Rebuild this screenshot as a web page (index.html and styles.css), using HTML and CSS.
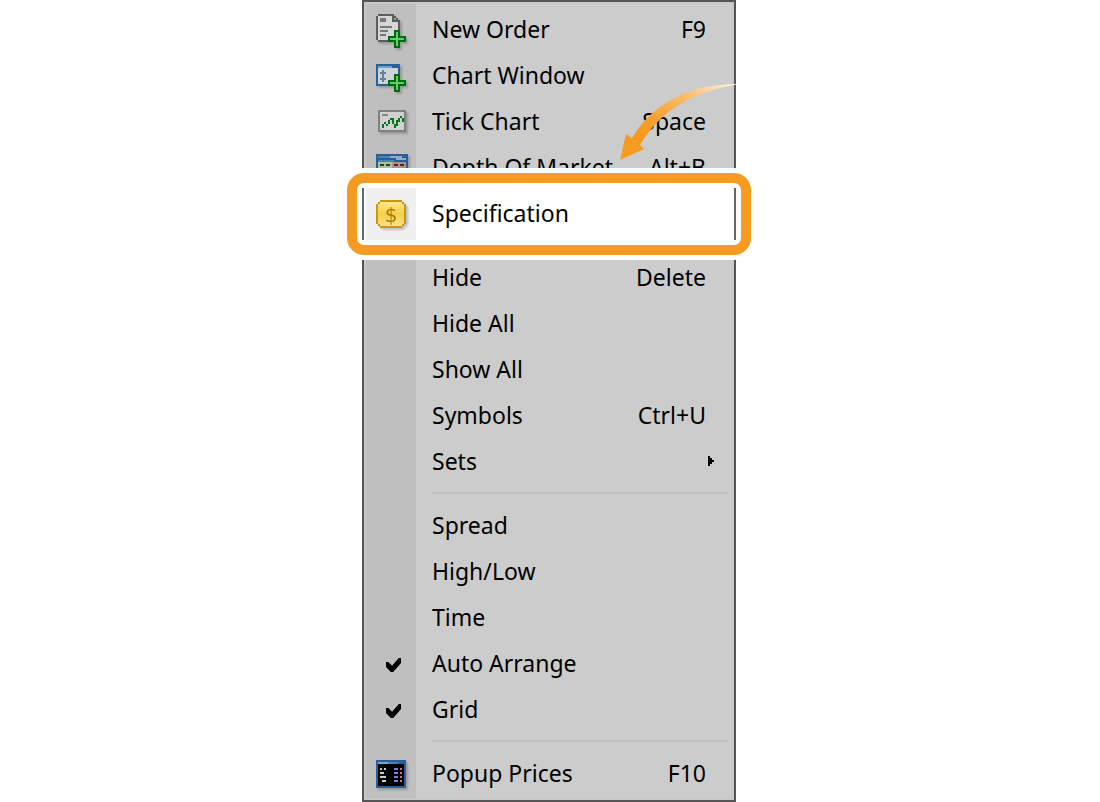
FILE: index.html
```
<!DOCTYPE html>
<html lang="en">
  <head>
    <meta charset="UTF-8" />
    <meta name="viewport" content="width=device-width, initial-scale=1" />
    <title>Market Watch Menu</title>
    <link rel="stylesheet" href="styles.css">
  </head>
  <body>
    <nav class="menu">
      <div class="menu-list">
        <button type="button" class="item">
          <svg class="icon" viewBox="0 0 18 18">
            <path fill="#d6d6d6" d="M2 2h7v3h3v9H2z" />
            <path fill="#5c5c5c" d="M1 2h1v12H1zM2 1h8v1H2zM2 14h6v1H2zM9 2h1v2h2v1H9zM10 2h1v1h-1zM11 3h1v1h-1zM12 4h1v5h-1z" />
            <path fill="#777" d="M3 3h3v2H3zM3 7h6v1H3zM3 9h4v1H3zM3 11h3v1H3z" />
            <path fill="#006b0b" d="M10 9h3v3h3v3h-3v3h-3v-3H7v-3h3z" />
            <path fill="#5fcf6b" d="M11 10h1v3h3v1h-3v3h-1v-3H8v-1h3z" />
          </svg>
          <span class="name">New Order</span>
          <span class="key">F9</span>
        </button>
        <button type="button" class="item">
          <svg class="icon" viewBox="0 0 18 18">
            <path fill="#2a6099" d="M1 3h12v11H1z" />
            <path fill="#d0d3d6" d="M2 5h10v8H2z" />
            <path fill="#6f9fce" d="M2 4h7v1H2z" />
            <path fill="#66809a" d="M4 6h1v6H4zM3 7h3v1H3zM3 10h3v1H3z" />
            <path fill="#006b0b" d="M10 8h3v3h3v3h-3v3h-3v-3H7v-3h3z" />
            <path fill="#5fcf6b" d="M11 9h1v3h3v1h-3v3h-1v-3H8v-1h3z" />
          </svg>
          <span class="name">Chart Window</span>
        </button>
        <button type="button" class="item">
          <svg class="icon" viewBox="0 0 18 18">
            <path fill="#808080" d="M2 3h14v11H2z" />
            <path fill="#cfd2cf" d="M3 4h12v9H3z" />
            <path fill="#888" d="M4 5h3v1H4z" />
            <path fill="#08751a" d="M4 10h1v2H4zM5 9h1v1H5zM6 10h1v1H6zM7 8h1v2H7zM8 7h1v1H8zM9 7h1v3H9zM10 10h1v2h-1zM11 8h1v3h-1zM12 7h1v2h-1zM13 6h1v1h-1zM14 7h1v2h-1z" />
          </svg>
          <span class="name">Tick Chart</span>
          <span class="key">Space</span>
        </button>
        <button type="button" class="item">
          <svg class="icon" viewBox="0 0 18 18">
            <path fill="#285f98" d="M1 2h16v14H1z" />
            <path fill="#4b83b9" d="M2 3h7v1H2zM2 5h8v1H2z" />
            <path fill="#8fabc8" d="M8 3h6v1H8zM11 4h5v1h-5z" />
            <path fill="#a9c58a" d="M2 6h7v9H2z" />
            <path fill="#c08a84" d="M9 6h7v9H9z" />
            <path fill="#333" d="M3 7h2v1H3zM6 7h2v1H6zM10 7h2v1h-2zM13 7h2v1h-2z" />
          </svg>
          <span class="name">Depth Of Market</span>
          <span class="key">Alt+B</span>
        </button>
        <button type="button" class="item item-marked">
          <svg class="icon" viewBox="0 0 18 18">
            <defs>
              <linearGradient id="gold" x1="0" y1="0" x2="0" y2="1">
                <stop offset="0" stop-color="#ffe88c" />
                <stop offset="0.5" stop-color="#f5cf48" />
                <stop offset="1" stop-color="#fce187" />
              </linearGradient>
            </defs>
            <path fill="#c49a0c" d="M3 2h11v1h1v1h1v10h-1v1h-1v1H3v-1H2v-1H1V4h1V3h1z" />
            <path fill="url(#gold)" d="M3 3h11v1h1v10h-1v1H3v-1H2V4h1z" />
            <text class="coin" x="8.5" y="13" text-anchor="middle">$</text>
          </svg>
          <span class="name">Specification</span>
        </button>
        <hr class="divider">
        <button type="button" class="item">
          <span class="name">Hide</span>
          <span class="key">Delete</span>
        </button>
        <button type="button" class="item">
          <span class="name">Hide All</span>
        </button>
        <button type="button" class="item">
          <span class="name">Show All</span>
        </button>
        <button type="button" class="item">
          <span class="name">Symbols</span>
          <span class="key">Ctrl+U</span>
        </button>
        <button type="button" class="item item-parent" aria-haspopup="true">
          <span class="name">Sets</span>
          <svg class="more" viewBox="0 0 3 5">
            <path d="M0 0h1v1h1v1h1v1H2v1H1v1H0z" />
          </svg>
        </button>
        <hr class="divider">
        <label class="item">
          <input type="checkbox" class="check">
          <span class="name">Spread</span>
        </label>
        <label class="item">
          <input type="checkbox" class="check">
          <span class="name">High/Low</span>
        </label>
        <label class="item">
          <input type="checkbox" class="check">
          <span class="name">Time</span>
        </label>
        <label class="item">
          <input type="checkbox" class="check" checked>
          <span class="name">Auto Arrange</span>
        </label>
        <label class="item">
          <input type="checkbox" class="check" checked>
          <span class="name">Grid</span>
        </label>
        <hr class="divider">
        <button type="button" class="item">
          <svg class="icon" viewBox="0 0 18 18">
            <path fill="#285f98" d="M1 2h15v14H1z" />
            <path fill="#7da7d0" d="M2 3h5v1H2z" />
            <path fill="#4b83b9" d="M7 3h5v1H7z" />
            <path fill="#000" d="M2 4h13v11H2z" />
            <path fill="#ccc" d="M3 6h1v1H3zM5 6h1v1H5zM3 8h2v1H3zM3 10h3v1H3zM4 12h2v1H4z" />
            <path fill="#7680d8" d="M10 6h2v1h-2zM10 8h2v1h-2zM10 10h2v1h-2zM10 12h2v1h-2z" />
            <path fill="#d86c70" d="M13 6h1v1h-1zM13 8h1v1h-1zM13 10h1v1h-1zM13 12h1v1h-1z" />
          </svg>
          <span class="name">Popup Prices</span>
          <span class="key">F10</span>
        </button>
      </div>

      <!-- Arrow pointing at the marked item -->
      <svg class="pointer" viewBox="0 0 120 80">
        <defs>
          <linearGradient id="fade" x1="0" y1="1" x2="1" y2="0">
            <stop offset="0.35" stop-color="#f59b22" />
            <stop offset="0.7" stop-color="#f9bd6c" />
            <stop offset="1" stop-color="#fff5e8" />
          </linearGradient>
        </defs>
        <path fill="url(#fade)" d="M0 78L6 52L12 56C32 22 70 1 120 2C74 9 42 27 20 63L24 67z" />
      </svg>
    </nav>
  </body>
</html>
```
FILE: styles.css
```
* {
  box-sizing: border-box;
}
body {
  margin: 0;
  padding-right: 2px;
  background-color: #fff;
  color: #000;
  font-family: "Noto Sans", "Open Sans", sans-serif;
  font-size: 23px;
  line-height: 32px;
}
.menu {
  position: relative;
  width: 100%;
  max-width: 374px;
  margin: 0 auto;
  padding: 2px;
  border: 2px solid #555;
  background-color: #c8c8c8;
}
.menu-list {
  padding: 3px 0 1px;
  background: linear-gradient(to right, #bfbfbf 50px, #ccc 50px);
}
.item {
  display: grid;
  grid-template-columns: 50px 1fr auto;
  align-items: center;
  width: 100%;
  height: 46px;
  padding: 0 26px 0 0;
  border: none;
  background: none;
  color: inherit;
  font: inherit;
  text-align: left;
  cursor: pointer;
}
.icon {
  width: 36px;
  height: 36px;
  margin-left: 8px;
  shape-rendering: crispEdges;
  filter: drop-shadow(2px 2px 1px rgba(0, 0, 0, 0.2));
}
.name,
.key {
  padding-bottom: 2px;
  white-space: nowrap;
}
.name {
  grid-column: 2;
  padding-left: 16px;
}
.key {
  grid-column: 3;
}
.item-parent {
  padding-right: 18px;
}
.more {
  width: 6px;
  height: 10px;
  margin-bottom: 2px;
  shape-rendering: crispEdges;
}
.coin {
  fill: #a67c00;
  font-family: "DejaVu Sans", sans-serif;
  font-size: 10px;
}
.check {
  appearance: none;
  width: 16px;
  height: 14px;
  margin: 2px 0 0 20px;
}
.check:checked {
  background-color: #000;
  clip-path: polygon(0 28%, 15% 28%, 38% 55%, 80% 0, 94% 0, 94% 35%, 45% 100%, 30% 100%, 0 65%);
}
.divider {
  height: 2px;
  margin: 7px 4px 9px 66px;
  border: none;
  background-color: #bfbfbf;
}

/* Callout around the marked item */
.item-marked {
  position: relative;
  z-index: 1;
}
.item-marked::before,
.item-marked::after {
  content: "";
  position: absolute;
  z-index: -1;
}
.item-marked::before {
  inset: -18px -19px;
  border: 10px solid #f59b22;
  border-radius: 17px;
  background-color: #fff;
  box-shadow: 0 0 0 5px #fff;
}
.item-marked::after {
  inset: -3px -4px;
  border: solid #666;
  border-width: 0 2px;
  background: linear-gradient(to right, #fff 2px, #f0f0f0 2px, #f0f0f0 52px, #fff 52px);
}
.pointer {
  position: absolute;
  top: 80px;
  right: -6px;
  z-index: 2;
  width: 120px;
  height: 80px;
  pointer-events: none;
}
```
